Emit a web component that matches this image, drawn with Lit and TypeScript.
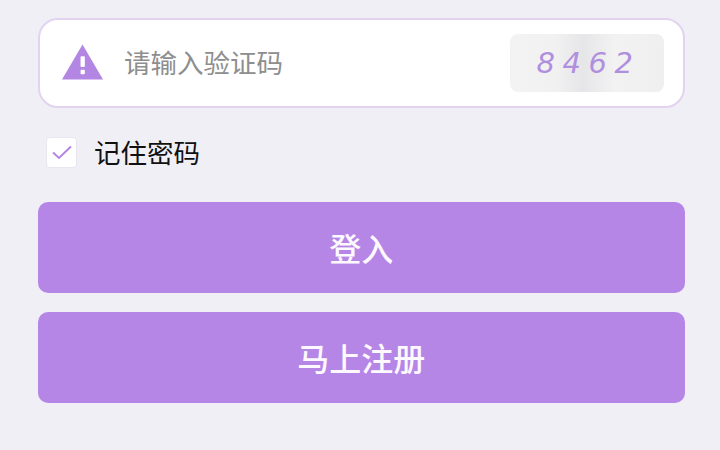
import { LitElement, html, css } from "lit";
import { customElement } from "lit/decorators.js";

@customElement("app-root")
export class AppRoot extends LitElement {
  static styles = css`
    :host {
      display: block;
      width: 720px;
      height: 450px;
      box-sizing: border-box;
      overflow: hidden;
      background: #f0eff6;
      padding: 18px 35.5px 0 38px;
      font-family: "Noto Sans CJK SC", "Noto Sans", sans-serif;
    }
    .field {
      height: 90px;
      box-sizing: border-box;
      background: #fff;
      border: 2px solid #e2d3f0;
      border-radius: 20px;
      display: flex;
      align-items: center;
      padding: 0 19px 0 22px;
    }
    .warn {
      width: 41px;
      height: 36px;
      flex: none;
      margin-top: -2px;
    }
    .placeholder {
      margin-left: 21px;
      font-size: 26.5px;
      line-height: 36px;
      color: #8e8e8e;
      flex: 1;
      margin-top: -3px;
    }
    .captcha {
      width: 154px;
      height: 58px;
      border-radius: 8px;
      background: linear-gradient(90deg, #f3f3f4 0%, #f1f1f2 30%, #e6e6e8 47%, #f2f2f3 68%, #efeff0 100%);
      display: flex;
      align-items: center;
      justify-content: center;
      font-family: "DejaVu Sans", "Liberation Sans", sans-serif;
      font-style: italic;
      font-size: 29px;
      letter-spacing: 7.5px;
      padding-left: 4px;
      box-sizing: border-box;
      color: #b18fdf;
    }
    .remember {
      display: flex;
      align-items: center;
      margin: 27px 0 0 8px;
      height: 34px;
    }
    .check {
      width: 31px;
      height: 31px;
      box-sizing: border-box;
      border-radius: 4px;
      background: #fff;
      border: 1px solid #e8e6f0;
      display: flex;
      align-items: center;
      justify-content: center;
    }
    .check svg {
      width: 22px;
      height: 18px;
    }
    .remember span {
      margin-left: 17px;
      font-size: 26.5px;
      line-height: 34px;
      color: #111;
    }
    .btn {
      height: 91px;
      border-radius: 10px;
      background: #b686e7;
      color: #fdf9ff;
      font-size: 32px;
      font-weight: 500;
      display: flex;
      align-items: center;
      justify-content: center;
      line-height: 40px;
      padding-bottom: 2px;
      box-sizing: border-box;
    }
    .btn.first {
      margin-top: 33px;
    }
    .btn.second {
      margin-top: 19px;
    }
  `;

  render() {
    return html`
      <div class="field">
        <svg class="warn" viewBox="0 0 42 36">
          <path fill="#b386e4" d="M21 0 L42 36 L0 36 Z" />
          <rect x="19" y="12" width="4.4" height="11" rx="1" fill="#fff" />
          <rect x="19" y="26" width="4.4" height="4.6" rx="1" fill="#fff" />
        </svg>
        <div class="placeholder">请输入验证码</div>
        <div class="captcha">8462</div>
      </div>
      <div class="remember">
        <div class="check">
          <svg viewBox="0 0 22 18">
            <path d="M2 9.5 L8 15 L20 3.5" fill="none" stroke="#b386e4" stroke-width="2" />
          </svg>
        </div>
        <span>记住密码</span>
      </div>
      <div class="btn first">登入</div>
      <div class="btn second">马上注册</div>
    `;
  }
}
